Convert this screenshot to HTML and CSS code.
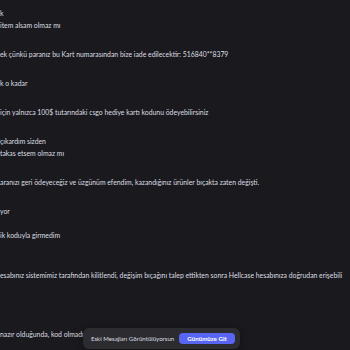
FILE: index.html
```html
<!DOCTYPE html>
<html lang="tr">
<head>
  <meta charset="UTF-8">
  <title>Mesajlar</title>
  <link rel="stylesheet" href="styles.css">
</head>
<body>
  <div class="chat">
    <div class="msg first">
      <div class="line">k</div>
      <div class="line">item alsam olmaz mı</div>
    </div>
    <div class="msg">
      <div class="line">ek çünkü paranız bu Kart numarasından bize iade edilecektir: 516840**8379</div>
    </div>
    <div class="msg">
      <div class="line">k o kadar</div>
    </div>
    <div class="msg">
      <div class="line">için yalnızca 100$ tutarındaki csgo hediye kartı kodunu ödeyebilirsiniz</div>
    </div>
    <div class="msg">
      <div class="line">çıkardım sizden</div>
      <div class="line">takas etsem olmaz mı</div>
    </div>
    <div class="msg">
      <div class="line">aranızı geri ödeyeceğiz ve üzgünüm efendim, kazandığınız ürünler bıçakta zaten değişti.</div>
    </div>
    <div class="msg">
      <div class="line">yor</div>
    </div>
    <div class="msg close">
      <div class="line">ik koduyla girmedim</div>
    </div>
    <div class="msg wide">
      <div class="line">esabınız sistemimiz tarafından kilitlendi, değişim bıçağını talep ettikten sonra Hellcase hesabınıza doğrudan erişebili</div>
    </div>
    <div class="msg wider">
      <div class="line">nazır olduğunda, kod olmadı</div>
    </div>
  </div>

  <div class="jump-bar">
    <span class="jump-text">Eski Mesajları Görüntülüyorsun</span>
    <button class="jump-btn">Günümüze Git</button>
  </div>
</body>
</html>
```

FILE: styles.css
```css
* {
  margin: 0;
  padding: 0;
  box-sizing: border-box;
}

html, body {
  width: 350px;
  height: 350px;
  overflow: hidden;
}

body {
  background-color: #1a1a1e;
  color: #dbdee1;
  font-family: Lato, "Noto Sans", sans-serif;
  font-size: 6.85px;
  position: relative;
}

.chat {
  display: flex;
  flex-direction: column;
  padding-top: 7px;
}

.msg {
  margin-top: 17px;
}

.msg.first { margin-top: 0; }
.msg.close { margin-top: 12px; }
.msg.wide { margin-top: 28px; }
.msg.wider { margin-top: 47px; }

.line {
  line-height: 12px;
  white-space: nowrap;
}

.jump-bar {
  position: absolute;
  left: 83px;
  top: 328px;
  width: 157px;
  height: 21px;
  display: flex;
  align-items: center;
  justify-content: space-between;
  padding: 0 5px 0 8px;
  background-color: #2b2b30;
  border-radius: 6px;
  box-shadow: 0 2px 8px rgba(0, 0, 0, 0.4);
}

.jump-text {
  font-size: 6.1px;
  color: #dbdee1;
  white-space: nowrap;
}

.jump-btn {
  flex-shrink: 0;
  border: none;
  background-color: #5865f2;
  color: #fff;
  font-family: inherit;
  font-size: 6.2px;
  font-weight: 700;
  white-space: nowrap;
  height: 11px;
  width: 56px;
  border-radius: 4px;
}
```
